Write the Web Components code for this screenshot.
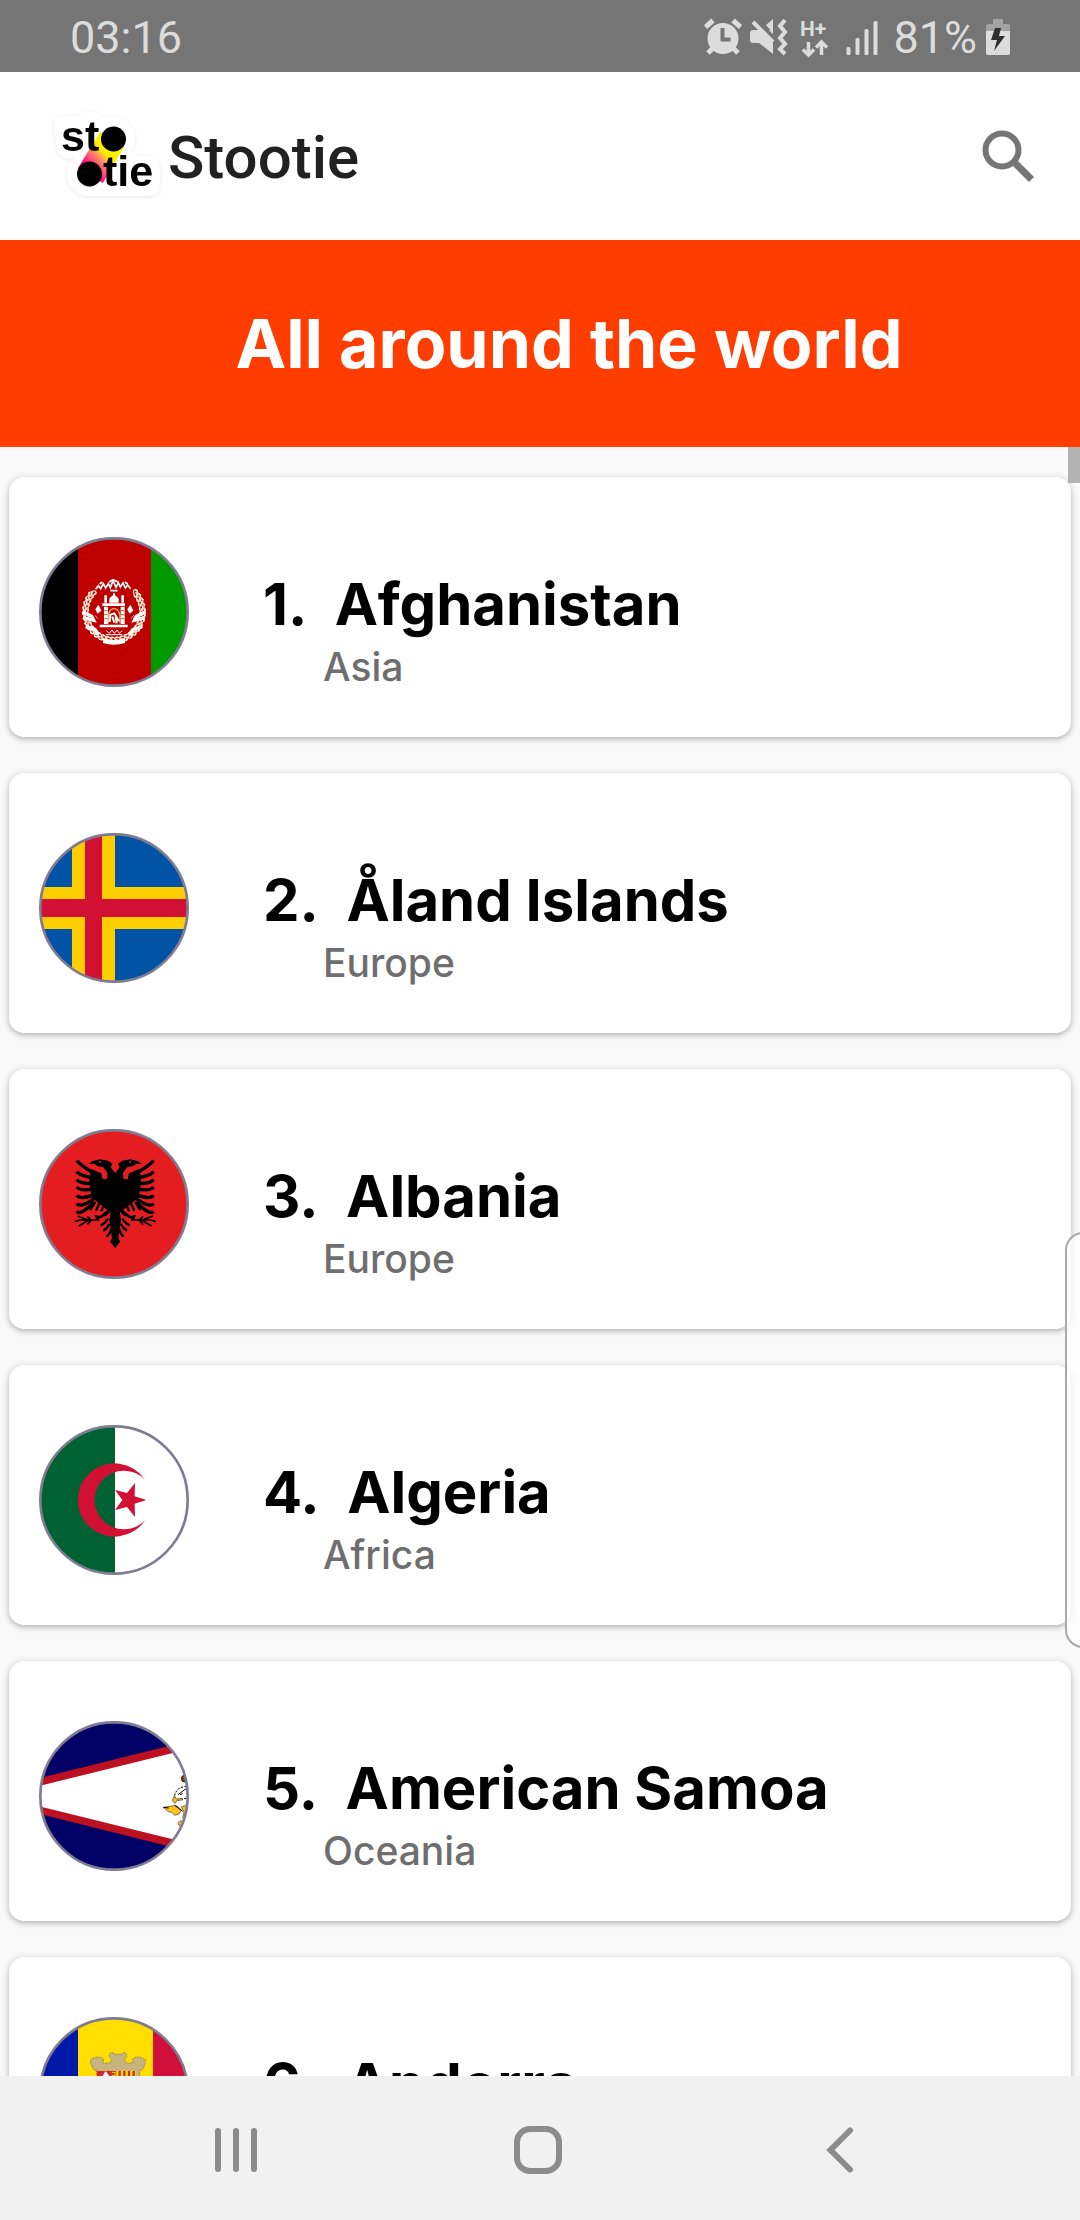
<!DOCTYPE html>
<html lang="en">
<head>
<meta charset="utf-8">
<meta name="viewport" content="width=device-width, initial-scale=1">
<title>Stootie</title>
<style>
  body { margin: 0; background: #f9f9f9; font-family: Inter, "Noto Sans", sans-serif; }
</style>
</head>
<body>
<stootie-app>
  <status-bar time="03:16" battery="81%"></status-bar>
  <app-bar>Stootie</app-bar>
  <page-banner>All around the world</page-banner>
  <country-list>
    <country-card rank="1" flag="af">Afghanistan<span slot="region">Asia</span></country-card>
    <country-card rank="2" flag="ax">Åland Islands<span slot="region">Europe</span></country-card>
    <country-card rank="3" flag="al">Albania<span slot="region">Europe</span></country-card>
    <country-card rank="4" flag="dz">Algeria<span slot="region">Africa</span></country-card>
    <country-card rank="5" flag="as">American Samoa<span slot="region">Oceania</span></country-card>
    <country-card rank="6" flag="ad">Andorra<span slot="region">Europe</span></country-card>
  </country-list>
  <nav-bar></nav-bar>
</stootie-app>

<script>
class Base extends HTMLElement {
  connectedCallback() {
    if (!this.shadowRoot) this.attachShadow({ mode: 'open' }).innerHTML = this.render();
  }
}

customElements.define('stootie-app', class extends Base {
  render() {
    return `<style>
      :host { display: flex; flex-direction: column; height: 100vh; position: relative; overflow: hidden; }
      .edge { position: absolute; right: -3px; top: 1232px; width: 16px; height: 412px;
        border: 2px solid #a9a9a9; border-right: 0; border-radius: 20px 0 0 20px; background: rgba(255,255,255,.75); }
    </style><slot></slot><div class="edge"></div>`;
  }
});

customElements.define('status-bar', class extends Base {
  render() {
    return `<style>
      :host { display: flex; align-items: center; justify-content: space-between; flex: none; height: 72px;
        padding: 0 70px 0 70px; background: #757575; color: #dcdcdc; font: 400 45px/72px Roboto, sans-serif; }
      .icons { display: flex; align-items: center; }
      span { padding-top: 4px; }
      svg { display: block; height: 72px; fill: #dcdcdc; }
      .level { margin: 0 9px 0 14px; }
    </style>
    <span>${this.getAttribute('time')}</span>
    <div class="icons">
      <svg width="175" viewBox="705 0 175 72" aria-hidden="true">
        <g stroke="#dcdcdc" stroke-width="5" fill="none">
          <path d="M706.500 27l7.500-6.500M741.500 27l-7.500-6.500M709 53l6-6M739 53l-6-6"/>
        </g>
        <circle cx="724" cy="38.500" r="15.500"/>
        <path d="M723.500 28v11.500h8" fill="none" stroke="#757575" stroke-width="4"/>
        <path d="M751 33q0-3 3-3h5l15 0v24l-14-11h-6q-3 0-3-3z"/>
        <path d="M752 21l23 23" stroke="#757575" stroke-width="4" transform="translate(3,-3)"/>
        <path d="M754 22l20 20" stroke="#dcdcdc" stroke-width="4"/>
        <path d="M774 19v14l-7-8z"/>
        <path d="M786 20l-5 6 5 6-5 6 5 6-5 5 5 5" fill="none" stroke="#dcdcdc" stroke-width="4"/>
        <text x="801" y="36" font-family="Roboto, sans-serif" font-size="21" font-weight="700">H+</text>
        <path d="M809.500 42v13M804 49.500l5.500 5.500 5.500-5.500M822.500 55V42M817 47.500l5.500-5.500 5.500 5.500" fill="none" stroke="#dcdcdc" stroke-width="3.500"/>
        <rect x="847.500" y="47" width="4" height="8" rx="1.500"/><rect x="856.500" y="38" width="4" height="17" rx="1.500"/>
        <rect x="865.500" y="29" width="4" height="26" rx="1.500"/><rect x="874.500" y="21" width="4" height="34" rx="1.500"/>
      </svg>
      <span class="level">${this.getAttribute('battery')}</span>
      <svg width="24" viewBox="986 0 24 72" aria-hidden="true">
        <path d="M986 31v-5q0-2 2-2h5v-5h10v5h5q2 0 2 2v5z" fill="#a3a3a3"/>
        <path d="M986 31h24v22q0 2-2 2h-20q-2 0-2-2z"/>
        <path d="M995 28h6l-2 8h6l-11 15 3-11h-6z" fill="#2e2e2e"/>
      </svg>
    </div>`;
  }
});

customElements.define('stootie-logo', class extends Base {
  render() {
    return `<style>
      :host { display: block; }
      svg { display: block; filter: drop-shadow(0 1px 2px rgba(0,0,0,.08)); overflow: visible; }
      text { font: 700 43px "Liberation Sans", sans-serif; }
    </style>
    <svg width="112" height="88" viewBox="51 112 112 88" aria-hidden="true">
      <defs><linearGradient id="g" gradientUnits="userSpaceOnUse" x1="88" y1="168" x2="112" y2="146">
        <stop offset="0" stop-color="#ff0090"/><stop offset=".5" stop-color="#ff9a60"/><stop offset=".7" stop-color="#fff000"/></linearGradient></defs>
      <g stroke="#fff" stroke-width="20" stroke-linejoin="round" fill="#fff">
        <path d="M64 126h22v-4h7v6h24v20H67zM88 164h18v-4h22v6h22v20H86z"/><circle cx="113" cy="139" r="12"/><circle cx="89" cy="174" r="12"/>
      </g>
      <path d="M78 168l22-36 24 15-21 36z" fill="url(#g)"/>
      <circle cx="113.500" cy="139" r="12.500"/><circle cx="89.500" cy="174" r="12.500"/>
      <text x="61" y="151">st</text><text x="103" y="186">tie</text>
    </svg>`;
  }
});

customElements.define('app-bar', class extends Base {
  render() {
    return `<style>
      :host { display: flex; align-items: center; flex: none; height: 168px; background: #fff; padding: 0 40px 0 51px; }
      h1 { flex: 1; margin: 0; padding: 4px 0 0 5px; font: 500 60px/70px Roboto, sans-serif; color: #212121; }
      button { border: 0; padding: 4px 0 0; background: none; }
      svg { display: block; }
    </style>
    <stootie-logo></stootie-logo>
    <h1><slot></slot></h1>
    <button type="button" aria-label="Search"><svg width="60" height="60" viewBox="0 0 60 60" fill="none" stroke="#757575">
      <circle cx="22" cy="22" r="16.500" stroke-width="6"/><path d="M35.500 35.500l16 16" stroke-width="7"/><path d="M33 33l5 5" stroke-width="4"/></svg></button>`;
  }
});

customElements.define('page-banner', class extends Base {
  render() {
    return `<style>
      :host { display: block; flex: none; box-sizing: border-box; height: 207px; padding: 60px 0 0 58px; background: #ff3d00; color: #fff; }
      h2 { margin: 0; text-align: center; font-weight: 700; font-size: 68px; line-height: 86px; }
    </style><h2><slot></slot></h2>`;
  }
});

customElements.define('country-list', class extends Base {
  render() {
    return `<style>
      :host { display: flex; flex-direction: column; gap: 36px; flex: 1; min-height: 0; overflow: hidden; position: relative; padding: 30px 9px 0; }
      .thumb { position: absolute; right: 0; top: 0; width: 12px; height: 36px; background: #b2b2b2; }
    </style><slot></slot><div class="thumb"></div>`;
  }
});

const feathers = [[152,190],[185,204],[209,220],[231,236],[256,254],[281,266],[304,276]]
  .map(([a, b]) => `<path d="M170 ${a}Q182 ${a + 14} 222 ${b}" stroke="#000" stroke-width="10" fill="none"/>`).join('');
const halfEagle = `
  ${feathers}
  <path d="M286 190L272 172 277 161 264 152 240 148 216 154 206 162 222 161 232 168 250 172 262 188 261 206 248 208 244 190 212 176 208 210 214 262 262 300 240 318 222 314 230 330 262 316 272 304 268 330 276 385 270 395 286 414z"/>
  <path d="M226 276l-16 24M240 276l-12 26M252 282l-8 22M264 326q-8 14-22 20M268 342q-6 14-18 20M274 356q-4 16-14 24" stroke="#000" stroke-width="7" fill="none"/>
  <path d="M238 330H182l-18 4M206 331l-34-13M206 331l-30 17M214 331l-12-12M214 331l-12 12" stroke="#000" stroke-width="5" fill="none"/>
  <circle cx="240" cy="156" r="3" fill="#e41e20"/>`;

let leaves = '';
for (let i = -130; i <= 130; i += 10) {
  leaves += `<g transform="rotate(${i} 343 455) translate(343 540)"><ellipse rx="12" ry="6" fill="none" stroke="#f3dcb8" stroke-width="4" transform="rotate(28)"/><path d="M-8 -9l6 3M2 10l7-4M-5 2h8" stroke="#fff" stroke-width="4"/></g>`;
}

// Each flag is drawn on a 450-unit square, three units to the pixel.
const FLAGS = {
  af: `<path fill="#000" d="M0 0h117v450H0z"/><path fill="#be0000" d="M117 0h219v450H117z"/><path fill="#090" d="M336 0h114v450H336z"/>
    <g transform="translate(-118 -231)" fill="none" stroke="#fff">${leaves}
      <path d="M248 455l28 14 6 12-32-8M438 455l-28 14-6 12 32-8M258 500l28 8 10 16M428 500l-28 8-10 16" stroke-width="10"/>
      <path d="M310 535q33 12 66 0v14q-33 10-66 0z" fill="#fff" stroke="none"/>
      <path d="M288 388l8-11 7 9 8-15 7 13 8-13 6 12 8-21 9 20 7-14 6 13 8-12 7 15 7-9 9 11M328 366l12-7 14 6M332 392h22M300 372l8-6M376 366l8 6" stroke-width="5"/>
      <path d="M308 430h68v8h-68zM313 440h12v52h-12zM363 440h12v52h-12zM314 406h8v22h-8zM365 406h8v22h-8zM329 428v-12q14-22 28 0v12zM340 400h6v8h-6zM300 494h84v8h-84z" fill="#fff" stroke="none"/>
      <path d="M314 452h10M314 464h10M314 476h10M364 452h10M364 464h10M364 476h10" stroke="#be6030" stroke-width="3"/>
      <path d="M326 490v-24q4-20 17-20t18 20v24" stroke="#e8b070" stroke-width="4"/><path d="M330 486l2-22 12-4 14 24M338 470l6 18M348 470l3 20" stroke-width="6"/>
      <path d="M288 448l8-12 8 16-10 8zM384 448l8-12 8 16-10 8zM286 466l8 10M402 466l-8 10" fill="#fff" stroke-width="2"/>
      <path d="M320 512l9 8 8-10 7 10 8-10 7 10 9-8M318 524h50" stroke-width="3"/>
    </g>`,
  ax: `<path fill="#0053a5" d="M0 0h450v450H0z"/><path fill="#ffce00" d="M99 0h129v450H99zM0 162h450v126H0z"/><path fill="#d21034" d="M138 0h51v450h-51zM0 198h450v54H0z"/>`,
  al: `<path fill="#e41e20" d="M0 0h450v450H0z"/><g transform="translate(-57 -57)">${halfEagle}</g><g transform="translate(514 -57) scale(-1 1)">${halfEagle}</g>`,
  dz: `<path fill="#fff" d="M0 0h450v450H0z"/><path fill="#006233" d="M0 0h228v450H0z"/>
    <g transform="translate(-57 -75)" fill="#d21034"><path d="M375 239A110 110 0 1 0 375 361A88 88 0 1 1 375 239z"/>
    <path d="M379 300L344 311 345 351 321 321 285 330 307 300 285 270 321 279 345 249 344 289z"/></g>`,
  as: `<path fill="#006" d="M0 0h450v450H0z"/><g transform="translate(-57 -63)">
    <path fill="#bd1021" d="M57 235L520 120V457L57 341z"/><path fill="#fff" d="M57 258L520 144V433L57 319z"/>
    <ellipse cx="493" cy="236" rx="9" ry="10" fill="#8b3a0c" stroke="#000" stroke-width="2"/>
    <path d="M500 258l-22 6-12 14-3 14 12 8 26-6" fill="#fff" stroke="#000" stroke-width="3" stroke-dasharray="7 4"/>
    <path d="M474 284l24-18M480 284l8-3" stroke="#000" stroke-width="3"/>
    <path d="M463 288q-12 16 3 22l5-9 17-1-2-5-17 2zM430 322l38-6 17 14-8 12-13 4-9-9-10-2zM484 320l16-4v44l-12-8 4-16zM480 362q-13 10 4 18l10-12z" fill="#ffc221" stroke="#000" stroke-width="1.500"/>
    <path d="M430 322l16 2M464 316l24 18" stroke="#000" stroke-width="3"/></g>`,
  ad: `<path fill="#0018a8" d="M0 0h117v450H0z"/><path fill="#ffde00" d="M117 0h225v450H117z"/><path fill="#d0103a" d="M342 0h108v450H342z"/>
    <path d="M172 160q-10 0-14-14-10-20 8-24 20-6 28 6l-2 10h20l6-10-8-10q0-8 8-12l10 6h18l10-6q8 4 8 12l-8 10 6 10h20l-2-10q8-12 28-6 18 4 8 24-4 14-14 14v80H172z" fill="#c7b37f" stroke="#806a3c" stroke-width="2" stroke-dasharray="6 3"/>
    <path d="M174 162h58v80h-58z" fill="#d52b1e"/><path d="M232 162h58v80h-58z" fill="#fedf00"/>
    <path d="M242 162v80M256 162v80M270 162v80M284 162v80" stroke="#d52b1e" stroke-width="7"/>
    <path d="M200 164l10 14h-18zM190 182h20" fill="#fff" stroke="#fff" stroke-width="3"/><path d="M218 166h10v10h-10" fill="none" stroke="#fedf00" stroke-width="3"/>`
};

customElements.define('country-flag', class extends Base {
  render() {
    return `<style>:host { display: block; flex: none; width: 150px; height: 150px; } svg { display: block; }</style>
    <svg width="150" height="150" viewBox="0 0 450 450" aria-hidden="true">
      <defs><clipPath id="c"><circle cx="225" cy="225" r="221"/></clipPath></defs>
      <g clip-path="url(#c)">${FLAGS[this.getAttribute('code')]}</g>
      <circle cx="225" cy="225" r="221" fill="none" stroke="#7f7c92" stroke-width="8"/>
    </svg>`;
  }
});

customElements.define('country-card', class extends Base {
  render() {
    return `<style>
      :host { display: flex; flex: none; box-sizing: border-box; height: 260px; padding: 60px 30px; gap: 74px;
        background: #fff; border-radius: 15px; box-shadow: 0 2px 6px rgba(0,0,0,.3); }
      h3 { margin: 0; padding-top: 31px; font-weight: 700; font-size: 58px; line-height: 72px; color: #000; white-space: nowrap; }
      p { margin: 0; padding: 2px 0 0 60px; font-weight: 500; font-size: 39px; line-height: 50px; color: #6e6e6e; }
    </style>
    <country-flag code="${this.getAttribute('flag')}"></country-flag>
    <div><h3>${this.getAttribute('rank')}.&nbsp; <slot></slot></h3><p><slot name="region"></slot></p></div>`;
  }
});

customElements.define('nav-bar', class extends Base {
  render() {
    return `<style>
      :host { display: flex; flex: none; height: 144px; padding: 0 89px 0 85px; background: #f1f1f1; }
      button { flex: 1; display: flex; align-items: center; justify-content: center; border: 0; padding: 4px 0 0; background: none; }
      svg { display: block; fill: none; stroke: #8c8c8c; stroke-width: 6; }
    </style>
    <button type="button" aria-label="Recent apps"><svg width="50" height="50" viewBox="0 0 50 50" stroke-linecap="round"><path d="M7 6v38M25 6v38M43 6v38"/></svg></button>
    <button type="button" aria-label="Home"><svg width="50" height="50" viewBox="0 0 50 50"><rect x="4" y="4" width="42" height="42" rx="13"/></svg></button>
    <button type="button" aria-label="Back"><svg width="50" height="50" viewBox="0 0 50 50" stroke-linecap="round"><path d="M35 5.500L15.500 25 35 44.500"/></svg></button>`;
  }
});
</script>
</body>
</html>
